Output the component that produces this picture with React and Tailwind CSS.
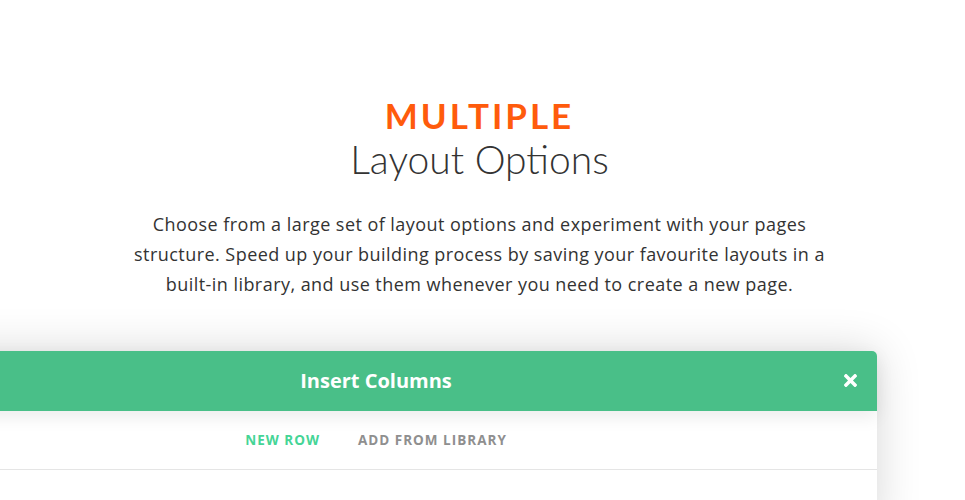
import { FaTimes } from 'react-icons/fa'

const App = () => {
  return (
    <div className="w-[965px] h-[500px] overflow-hidden bg-white" style={{ fontFamily: '"Open Sans", sans-serif' }}>
      <div className="flex flex-col items-center pt-[93px] pr-[6px]">
        <h2 className="text-[35px] leading-[44px] font-bold tracking-[3px] text-[#ff5b0c]" style={{ fontFamily: 'Lato, sans-serif' }}>
          MULTIPLE
        </h2>
        <h3 className="text-[39px] leading-[44px] font-light text-[#333]" style={{ fontFamily: 'Lato, sans-serif' }}>
          Layout Options
        </h3>
        <p className="mt-[28px] text-center text-[18px] leading-[30px] tracking-[0.45px] text-[#333]">
          Choose from a large set of layout options and experiment with your pages
          <br />
          structure. Speed up your building process by saving your favourite layouts in a
          <br />
          built-in library, and use them whenever you need to create a new page.
        </p>
      </div>

      <div className="mt-[52px] ml-[-125px] w-[1002px] bg-white rounded-tr-[5px] shadow-[0_0_45px_rgba(0,0,0,0.16)]">
        <div className="relative h-[60px] flex items-center justify-center bg-[#49bf88] rounded-tr-[5px] shadow-[0_6px_18px_rgba(0,0,0,0.08)]">
          <span className="text-[20px] font-bold text-white">Insert Columns</span>
          <button className="absolute right-[17px] top-[20px] text-white">
            <FaTimes size={19} />
          </button>
        </div>
        <div className="h-[59px] flex items-center justify-center gap-[38px] border-b border-[#e5e5e5]">
          <span className="text-[13.5px] font-bold tracking-[1px] text-[#45d596]">NEW ROW</span>
          <span className="text-[13.5px] font-bold tracking-[1px] text-[#8f8f8f]">ADD FROM LIBRARY</span>
        </div>
        <div className="h-[60px]" />
      </div>
    </div>
  )
}

export default App
